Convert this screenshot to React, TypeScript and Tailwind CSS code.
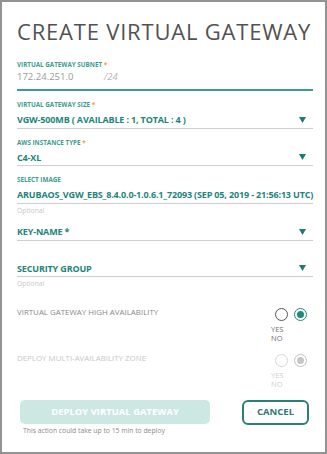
import React from "react";

const font = { fontFamily: '"Open Sans", "Noto Sans", sans-serif' };

const Caret = () => (
  <svg width="7" height="6" viewBox="0 0 7 6" className="shrink-0">
    <path d="M0 0 H7 L3.5 6 Z" fill="#1f7a70" />
  </svg>
);

const Label = ({ text, required }: { text: string; required?: boolean }) => (
  <div className="h-[8px] whitespace-nowrap text-[6.3px] font-bold leading-[8px] text-[#3d9c90]">
    {text}
    {required && <span className="text-[#f0a030]"> *</span>}
  </div>
);

const Optional = () => (
  <div className="mt-[3px] h-[8px] text-[6.8px] leading-[8px] text-[#c8c8c8]">
    Optional
  </div>
);

const SelectField = ({
  label,
  value,
  required,
  caret = true,
}: {
  label?: string;
  value: string;
  required?: boolean;
  caret?: boolean;
}) => (
  <div className="flex flex-col">
    {label && <Label text={label} required={required} />}
    <div
      className={`flex items-center justify-between border-b border-[#cfcfcf] pb-[1.5px] pr-[7px] ${
        label ? "mt-[4px]" : ""
      }`}
    >
      <span className="h-[13px] whitespace-nowrap text-[9px] font-bold leading-[13px] tracking-[-0.15px] text-[#22847a]">
        {value}
      </span>
      {caret && <Caret />}
    </div>
  </div>
);

const Radio = ({ checked, light }: { checked?: boolean; light?: boolean }) => (
  <div
    className={`flex h-[13px] w-[13px] items-center justify-center rounded-full border-[1.5px] ${
      checked
        ? light
          ? "border-[#c2c2c2]"
          : "border-[#1f8a7c]"
        : light
        ? "border-[#d6d6d6]"
        : "border-[#555]"
    }`}
  >
    {checked && (
      <div
        className={`h-[7px] w-[7px] rounded-full ${
          light ? "bg-[#c6c6c6]" : "bg-[#1f8a7c]"
        }`}
      />
    )}
  </div>
);

const ToggleRow = ({ text, light }: { text: string; light?: boolean }) => (
  <div className="flex items-start justify-between">
    <span
      className={`whitespace-nowrap text-[7.9px] leading-[11px] ${
        light ? "text-[#c8c8c8]" : "text-[#888]"
      }`}
    >
      {text}
    </span>
    <div className="mr-[6px] flex flex-col">
      <div className="mt-[1px] flex gap-[6.5px] pl-[3.5px]">
        <Radio light={light} />
        <Radio checked light={light} />
      </div>
      <div
        className={`mt-[4px] text-[7.5px] leading-[9px] ${
          light ? "text-[#d0d0d0]" : "text-[#707070]"
        }`}
      >
        YES
        <br />
        NO
      </div>
    </div>
  </div>
);

export default function App() {
  return (
    <div
      style={font}
      className="h-[454px] w-[327px] overflow-hidden border-2 border-[#939393] bg-white"
    >
      <div className="flex flex-col pl-[15px] pr-[12px] pt-[16px]">
        <h1 className="h-[26px] whitespace-nowrap text-[22px] leading-[26px] tracking-[0.8px] text-[#525252]">
          CREATE VIRTUAL GATEWAY
        </h1>

        <div className="mt-[17px]">
          <Label text="VIRTUAL GATEWAY SUBNET" required />
          <div className="mt-[2px] flex items-center border-b-2 border-[#3d9c90] pb-[6px]">
            <span className="h-[12px] w-[87px] text-[9.5px] leading-[12px] text-[#9a9a9a]">
              172.24.251.0
            </span>
            <span className="h-[12px] text-[9.5px] italic leading-[12px] text-[#b8b8b8]">
              /24
            </span>
          </div>
        </div>

        <div className="mt-[10px] flex flex-col gap-[10px]">
          <SelectField
            label="VIRTUAL GATEWAY SIZE"
            required
            value="VGW-500MB ( AVAILABLE : 1, TOTAL : 4 )"
          />
          <SelectField label="AWS INSTANCE TYPE" required value="C4-XL" />
          <div>
            <SelectField
              label="SELECT IMAGE"
              caret={false}
              value="ARUBAOS_VGW_EBS_8.4.0.0-1.0.6.1_72093 (SEP 05, 2019 - 21:56:13 UTC)"
            />
            <Optional />
          </div>
        </div>

        <div className="mt-[10.5px]">
          <SelectField value="KEY-NAME *" />
        </div>
        <div className="mt-[21px]">
          <SelectField value="SECURITY GROUP" />
          <Optional />
        </div>

        <div className="mt-[19px]">
          <ToggleRow text="VIRTUAL GATEWAY HIGH AVAILABILITY" />
        </div>
        <div className="mt-[10px]">
          <ToggleRow text="DEPLOY MULTI-AVAILABILITY ZONE" light />
        </div>

        <div className="mt-[10.5px] flex items-start justify-between pl-[3px] pr-[4px]">
          <div className="flex flex-col">
            <button className="h-[24.5px] w-[190px] rounded-[5px] bg-[#cde8e3] text-[9.3px] font-bold tracking-[0.1px] text-white">
              DEPLOY VIRTUAL GATEWAY
            </button>
            <div className="mt-[3px] h-[8px] whitespace-nowrap pl-[3px] text-[6.8px] leading-[8px] text-[#8a8a8a]">
              This action could take up to 15 min to deploy
            </div>
          </div>
          <button className="h-[25px] w-[67px] rounded-[6px] border-2 border-[#2a8076] text-[9.5px] font-bold text-[#2a7b72]">
            CANCEL
          </button>
        </div>
      </div>
    </div>
  );
}
